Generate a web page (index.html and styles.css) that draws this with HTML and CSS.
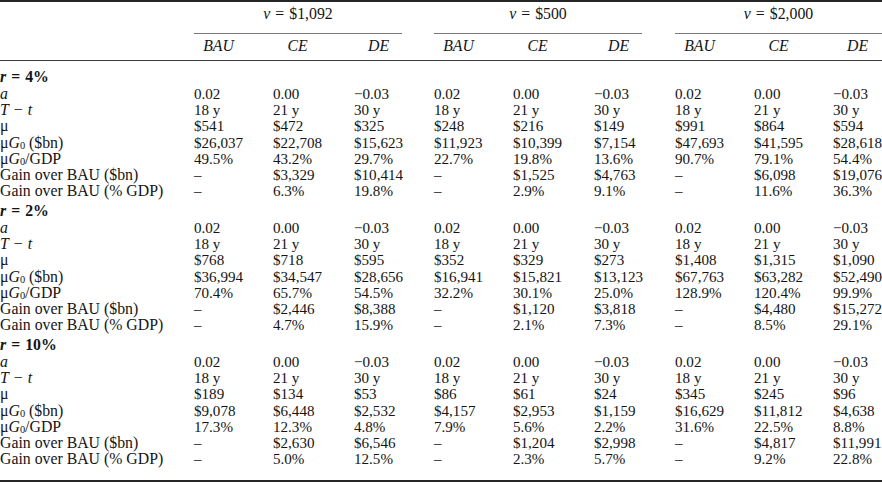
FILE: index.html
```html
<!DOCTYPE html>
<html>
<head>
<meta charset="utf-8">
<link rel="stylesheet" href="styles.css">
</head>
<body>
<table class="tbl">
<colgroup>
<col class="c-label"><col class="c79"><col class="c81"><col class="c80"><col class="c79"><col class="c81"><col class="c81"><col class="c79"><col class="c79"><col class="c49">
</colgroup>
<thead>
<tr class="grp">
<th></th>
<th colspan="3"><div class="cmid cmid-1"><i>v</i><span class="op">=</span>$1,092</div></th>
<th colspan="3"><div class="cmid cmid-2"><i>v</i><span class="op">=</span>$500</div></th>
<th colspan="3"><div class="cmid"><i>v</i><span class="op">=</span>$2,000</div></th>
</tr>
<tr class="hdr">
<th></th>
<th><span class="h">BAU</span></th><th><span class="h">CE</span></th><th><span class="h">DE</span></th>
<th><span class="h">BAU</span></th><th><span class="h">CE</span></th><th><span class="h">DE</span></th>
<th><span class="h">BAU</span></th><th><span class="h">CE</span></th><th><span class="h">DE</span></th>
</tr>
</thead>
<tbody>
<tr class="sec first"><td colspan="10"><b><i>r</i><span class="op">=</span>4%</b></td></tr>
<tr><td><i>a</i></td><td>0.02</td><td>0.00</td><td>−0.03</td><td>0.02</td><td>0.00</td><td>−0.03</td><td>0.02</td><td>0.00</td><td>−0.03</td></tr>
<tr><td><i>T</i><span class="op">−</span><i>t</i></td><td>18 y</td><td>21 y</td><td>30 y</td><td>18 y</td><td>21 y</td><td>30 y</td><td>18 y</td><td>21 y</td><td>30 y</td></tr>
<tr><td>μ</td><td>$541</td><td>$472</td><td>$325</td><td>$248</td><td>$216</td><td>$149</td><td>$991</td><td>$864</td><td>$594</td></tr>
<tr><td>μ<i>G</i><sub>0</sub> ($bn)</td><td>$26,037</td><td>$22,708</td><td>$15,623</td><td>$11,923</td><td>$10,399</td><td>$7,154</td><td>$47,693</td><td>$41,595</td><td>$28,618</td></tr>
<tr><td>μ<i>G</i><sub>0</sub>/GDP</td><td>49.5%</td><td>43.2%</td><td>29.7%</td><td>22.7%</td><td>19.8%</td><td>13.6%</td><td>90.7%</td><td>79.1%</td><td>54.4%</td></tr>
<tr><td>Gain over BAU ($bn)</td><td>–</td><td>$3,329</td><td>$10,414</td><td>–</td><td>$1,525</td><td>$4,763</td><td>–</td><td>$6,098</td><td>$19,076</td></tr>
<tr><td>Gain over BAU (% GDP)</td><td>–</td><td>6.3%</td><td>19.8%</td><td>–</td><td>2.9%</td><td>9.1%</td><td>–</td><td>11.6%</td><td>36.3%</td></tr>

<tr class="sec"><td colspan="10"><b><i>r</i><span class="op">=</span>2%</b></td></tr>
<tr><td><i>a</i></td><td>0.02</td><td>0.00</td><td>−0.03</td><td>0.02</td><td>0.00</td><td>−0.03</td><td>0.02</td><td>0.00</td><td>−0.03</td></tr>
<tr><td><i>T</i><span class="op">−</span><i>t</i></td><td>18 y</td><td>21 y</td><td>30 y</td><td>18 y</td><td>21 y</td><td>30 y</td><td>18 y</td><td>21 y</td><td>30 y</td></tr>
<tr><td>μ</td><td>$768</td><td>$718</td><td>$595</td><td>$352</td><td>$329</td><td>$273</td><td>$1,408</td><td>$1,315</td><td>$1,090</td></tr>
<tr><td>μ<i>G</i><sub>0</sub> ($bn)</td><td>$36,994</td><td>$34,547</td><td>$28,656</td><td>$16,941</td><td>$15,821</td><td>$13,123</td><td>$67,763</td><td>$63,282</td><td>$52,490</td></tr>
<tr><td>μ<i>G</i><sub>0</sub>/GDP</td><td>70.4%</td><td>65.7%</td><td>54.5%</td><td>32.2%</td><td>30.1%</td><td>25.0%</td><td>128.9%</td><td>120.4%</td><td>99.9%</td></tr>
<tr><td>Gain over BAU ($bn)</td><td>–</td><td>$2,446</td><td>$8,388</td><td>–</td><td>$1,120</td><td>$3,818</td><td>–</td><td>$4,480</td><td>$15,272</td></tr>
<tr><td>Gain over BAU (% GDP)</td><td>–</td><td>4.7%</td><td>15.9%</td><td>–</td><td>2.1%</td><td>7.3%</td><td>–</td><td>8.5%</td><td>29.1%</td></tr>

<tr class="sec"><td colspan="10"><b><i>r</i><span class="op">=</span>10%</b></td></tr>
<tr><td><i>a</i></td><td>0.02</td><td>0.00</td><td>−0.03</td><td>0.02</td><td>0.00</td><td>−0.03</td><td>0.02</td><td>0.00</td><td>−0.03</td></tr>
<tr><td><i>T</i><span class="op">−</span><i>t</i></td><td>18 y</td><td>21 y</td><td>30 y</td><td>18 y</td><td>21 y</td><td>30 y</td><td>18 y</td><td>21 y</td><td>30 y</td></tr>
<tr><td>μ</td><td>$189</td><td>$134</td><td>$53</td><td>$86</td><td>$61</td><td>$24</td><td>$345</td><td>$245</td><td>$96</td></tr>
<tr><td>μ<i>G</i><sub>0</sub> ($bn)</td><td>$9,078</td><td>$6,448</td><td>$2,532</td><td>$4,157</td><td>$2,953</td><td>$1,159</td><td>$16,629</td><td>$11,812</td><td>$4,638</td></tr>
<tr><td>μ<i>G</i><sub>0</sub>/GDP</td><td>17.3%</td><td>12.3%</td><td>4.8%</td><td>7.9%</td><td>5.6%</td><td>2.2%</td><td>31.6%</td><td>22.5%</td><td>8.8%</td></tr>
<tr><td>Gain over BAU ($bn)</td><td>–</td><td>$2,630</td><td>$6,546</td><td>–</td><td>$1,204</td><td>$2,998</td><td>–</td><td>$4,817</td><td>$11,991</td></tr>
<tr class="last"><td>Gain over BAU (% GDP)</td><td>–</td><td>5.0%</td><td>12.5%</td><td>–</td><td>2.3%</td><td>5.7%</td><td>–</td><td>9.2%</td><td>22.8%</td></tr>
</tbody>
</table>
</body>
</html>
```
FILE: styles.css
```css
html, body {
  margin: 0;
  padding: 0;
  background: #ffffff;
}
body {
  width: 882px;
  height: 482px;
  overflow: hidden;
  font-family: "Liberation Serif", "Times New Roman", serif;
  font-size: 15.8px;
  color: #141414;
}
.tbl {
  width: 882px;
  table-layout: fixed;
  border-collapse: separate;
  border-spacing: 0;
  border-top: 2px solid #262626;
  border-bottom: 2px solid #262626;
}
.c-label { width: 194px; }
.c79 { width: 79px; }
.c80 { width: 80px; }
.c81 { width: 81px; }
.c49 { width: 49px; }

.tbl th, .tbl td {
  padding: 0;
  text-align: left;
  font-weight: normal;
  white-space: nowrap;
  vertical-align: top;
}
.op {
  margin: 0 5px;
}
.grp th {
  padding-top: 4px;
  line-height: 16px;
}
.cmid {
  text-align: center;
  padding-bottom: 11px;
  border-bottom: 1px solid #7a7a7a;
}
.cmid-1 { margin-right: 32px; }
.cmid-2 { margin-right: 33px; }

.hdr th {
  padding-top: 4px;
  padding-bottom: 6px;
  line-height: 16px;
  border-bottom: 1px solid #3a3a3a;
  font-style: italic;
}
.h {
  display: inline-block;
  width: 49px;
  text-align: center;
}

.tbl td {
  line-height: 16.2px;
}
.tbl td + td {
  font-size: 15.1px;
}
.sec td {
  padding-top: 3.6px;
  padding-bottom: 0.8px;
}
.sec.first td {
  padding-top: 8px;
}
.last td {
  padding-bottom: 12.2px;
}
sub {
  font-size: 66%;
  line-height: 0;
  vertical-align: -1px;
}
```
